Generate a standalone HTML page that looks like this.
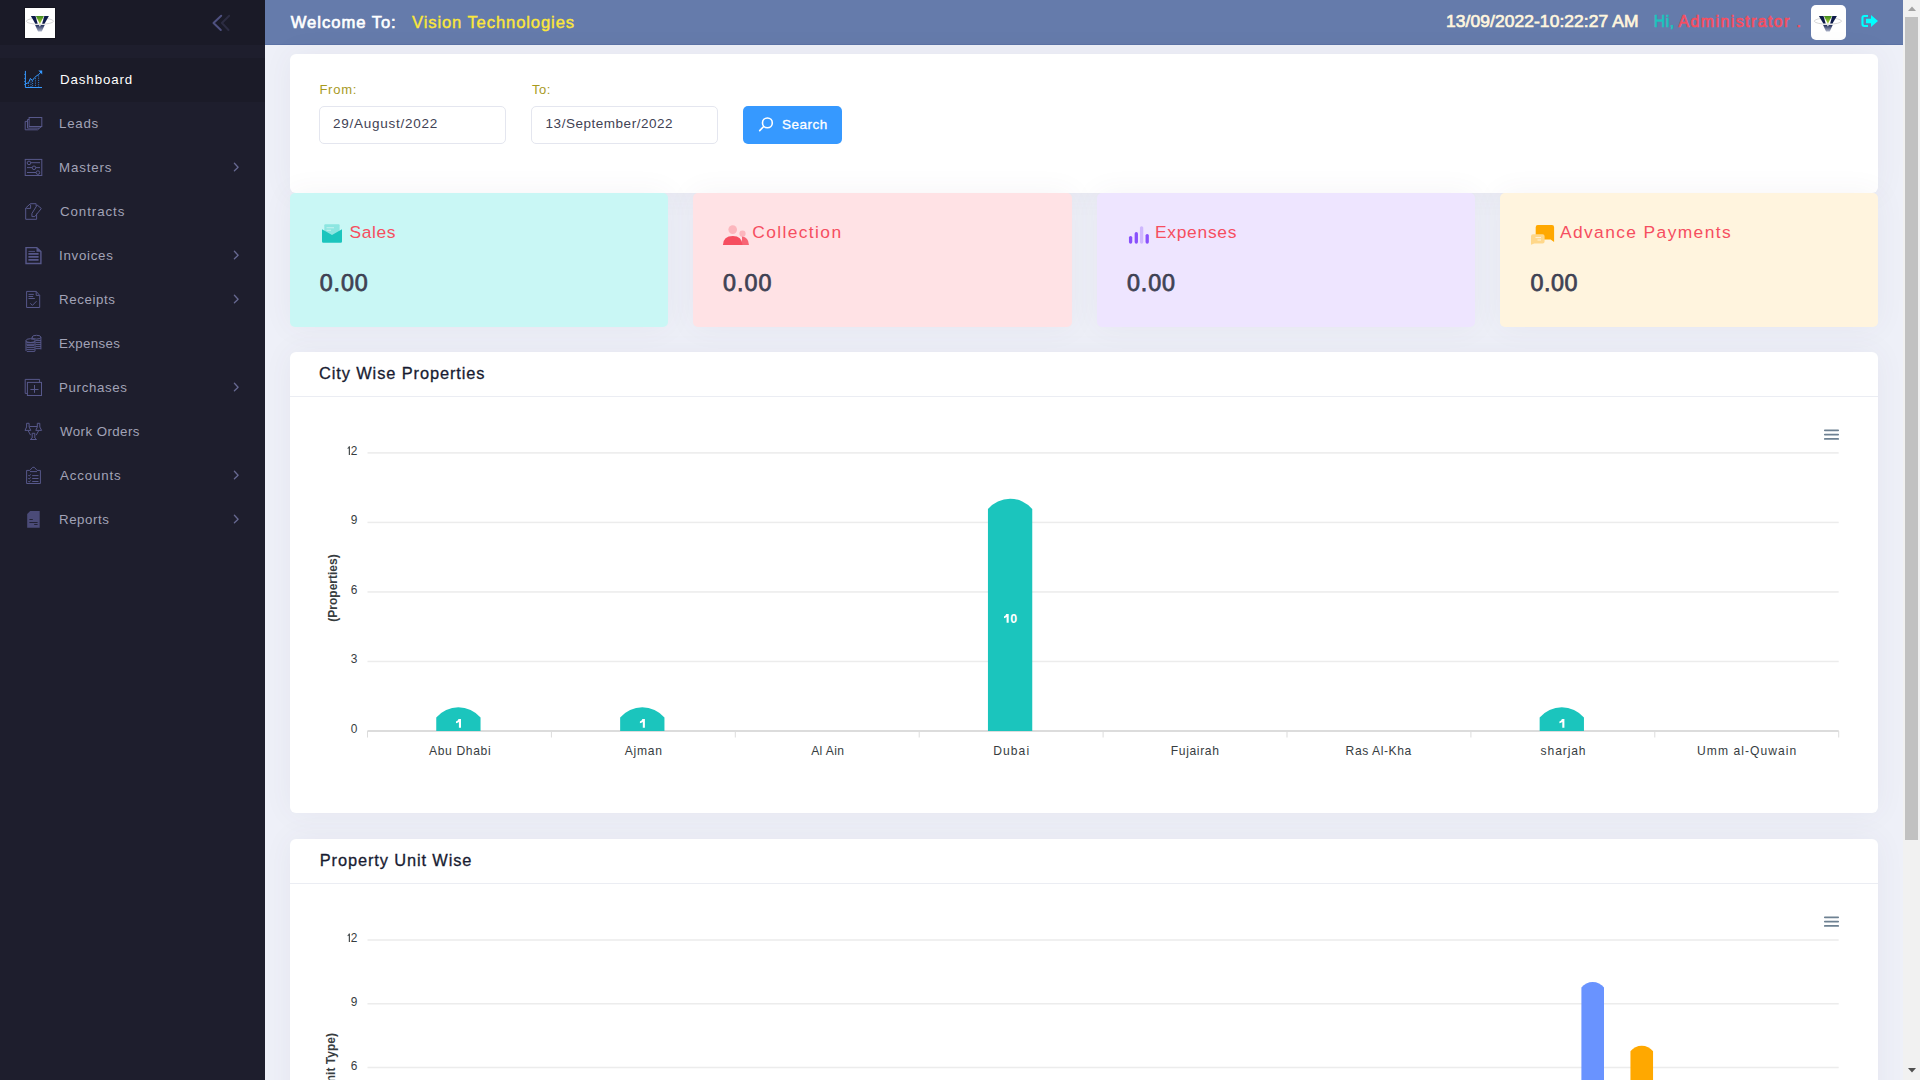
<!DOCTYPE html><html><head><meta charset="utf-8"><style>
*{margin:0;padding:0;box-sizing:border-box}
html,body{width:1920px;height:1080px;overflow:hidden;background:#eef0f8;font-family:"Liberation Sans", sans-serif}
.t{position:absolute;white-space:nowrap;line-height:1}
#aside{position:absolute;left:0;top:0;width:265px;height:1080px;background:#1e1e2d}
#aside-logo{position:absolute;left:0;top:0;width:265px;height:45px;background:#1a1a27}
#menu-active{position:absolute;left:0;top:58px;width:265px;height:44px;background:#1b1b28}
.logo{position:absolute;background:#fff}
#header{position:absolute;left:265px;top:0;width:1638px;height:45px;background:#657bab;border-bottom:1px solid #5b72a5}
.card{position:absolute;background:#fff;border-radius:6px;box-shadow:0 0 30px 0 rgba(82,63,105,0.06)}
.inp{position:absolute;background:#fff;border:1px solid #e4e6ef;border-radius:5px}
.btn{position:absolute;background:#3699ff;border-radius:5px}
.stat{position:absolute;border-radius:5px;box-shadow:0 0 30px 0 rgba(82,63,105,0.06)}
.hline{position:absolute;height:1px;background:#ebedf3}
.grid{position:absolute;height:1px;background:#e0e0e0}
.axis{position:absolute;height:1px;background:#e0e0e0}
.tick{position:absolute;width:1px;height:6px;background:#e0e0e0}
.ham{position:absolute;width:15px;height:11px;border-top:2px solid #6e8192;border-bottom:2px solid #6e8192}
.ham::after{content:"";position:absolute;left:0;top:2.5px;width:15px;height:2px;background:#6e8192}
#sb{position:absolute;left:1903px;top:0;width:17px;height:1080px;background:#f1f1f1}
#sbthumb{position:absolute;left:1905px;top:17px;width:13px;height:823px;background:#c1c1c1}
</style></head><body>
<div id="aside"></div><div id="aside-logo"></div><div id="menu-active"></div><div class="logo" style="left:25px;top:8px;width:30px;height:30px;box-shadow:0 0 0 1px #14141e"></div><svg style="position:absolute;left:0px;top:0px;overflow:visible" width="60" height="44" viewBox="0 0 60 44"><g transform="translate(39.9,16.1)">
<ellipse cx="0" cy="5.1" rx="13.6" ry="3.1" fill="none" stroke="#c4c4c4" stroke-width="0.7"/>
<polygon points="-9,0 -4.4,0 -2.2,7.6 -4.6,7.6" fill="#0d1a4a"/>
<polygon points="9,0 4.4,0 2.2,7.6 4.6,7.6" fill="#0d1a4a"/>
<polygon points="-4,0 4,0 0,7.8" fill="url(#lg39)"/>
<path d="M-4.8 9 H-0.9 L0 10.6 L0.9 9 H4.8 L2.1 14.9 Q1.9 15.4 1.2 15.4 H-1.2 Q-1.9 15.4 -2.1 14.9 Z" fill="url(#lb39)"/>
</g>
<defs><linearGradient id="lg39" x1="0" y1="0" x2="0" y2="1"><stop offset="0" stop-color="#3f8a1e"/><stop offset="1" stop-color="#b5d63c"/></linearGradient>
<linearGradient id="lb39" x1="0" y1="0" x2="0" y2="1"><stop offset="0" stop-color="#26325e"/><stop offset="1" stop-color="#aab1c7"/></linearGradient></defs></svg>
<svg style="position:absolute;left:20px;top:66px;overflow:visible" width="28" height="28" viewBox="0 0 28 28"><g fill="none" stroke="#3699ff" stroke-width="1">
<path d="M5.4 4.9 V21.5 H22"/>
<polyline points="5.4,17.9 8.6,16.6 10.4,12.4 12.4,14.5 14.5,11.7 16.9,9.6 18.7,8.6 21,6"/>
<path d="M8.6 17 V21 M11 13.5 V21 M12.6 14.8 V21 M15.5 12.2 V21 M18.6 9.5 V21" stroke-dasharray="1 1.2" stroke-width="0.8"/>
<path d="M4.2 8.4 H5.4 M4.2 12.4 H5.4 M4.2 15.5 H5.4 M4.2 18.5 H5.4" stroke-width="0.8"/>
</g><polygon points="18.4,4.6 22.2,4.6 22.2,8.4" fill="#3699ff"/></svg>
<svg style="position:absolute;left:20px;top:110px;overflow:visible" width="28" height="28" viewBox="0 0 28 28"><g fill="none" stroke="#57588a" stroke-width="1"><rect x="9.1" y="7.5" width="12.7" height="9"/>
<path d="M9.1 9.5 H7.5 V18.1 H19.4 L21.8 16.5"/><path d="M7.5 11.4 H5.2 V19.8 H17.6 L19.6 18.1"/></g></svg>
<svg style="position:absolute;left:20px;top:154px;overflow:visible" width="28" height="28" viewBox="0 0 28 28"><g fill="none" stroke="#57588a" stroke-width="1"><rect x="5.2" y="5.4" width="16.6" height="16.1"/>
<path d="M10.8 8.7 H20 M7 13.6 H12.2 M15.8 13.6 H20 M7 18.5 H16"/>
<circle cx="9" cy="8.9" r="1.8"/><circle cx="14" cy="13.8" r="1.8"/><circle cx="17.9" cy="18.6" r="1.8"/></g></svg>
<svg style="position:absolute;left:20px;top:198px;overflow:visible" width="28" height="28" viewBox="0 0 28 28"><g fill="none" stroke="#57588a" stroke-width="1"><path d="M5.7 10 L10.4 5.7 H16.1 V8 M16.6 15.6 V21.3 H5.7 V10 M6.3 10.4 H10.6 V6.5"/>
<path d="M17.2 7 L21.3 10.5 L14.8 18.6 H11.9 V15.5 Z"/></g></svg>
<svg style="position:absolute;left:20px;top:242px;overflow:visible" width="28" height="28" viewBox="0 0 28 28"><g fill="none" stroke="#57588a" stroke-width="1.4"><path d="M6 5.6 H16.8 L20.9 9.6 V21.5 H6 Z"/></g>
<polygon points="16.5,5.6 20.9,9.8 20.9,9.8 16.5,9.8" fill="#57588a"/>
<g stroke="#57588a" stroke-width="1.6"><path d="M8.4 11.9 H18.6 M8.4 14.9 H18.6 M8.4 17.9 H18.6"/></g>
<path d="M8.5 9.4 H15" stroke="#57588a" stroke-width="0.9"/></svg>
<svg style="position:absolute;left:20px;top:286px;overflow:visible" width="28" height="28" viewBox="0 0 28 28"><g fill="none" stroke="#57588a" stroke-width="1"><path d="M6.6 5.4 H16.2 L19.7 9.4 V21.5 H6.6 Z M16.2 5.4 V9.4 H19.7"/>
<path d="M8.5 8.4 H13.8 M8.5 10.5 H13.2 M8.5 12.5 H14.8"/><path d="M10.3 17.4 L12.5 19.3 L16.5 15.2"/></g></svg>
<svg style="position:absolute;left:20px;top:330px;overflow:visible" width="28" height="28" viewBox="0 0 28 28"><g fill="none" stroke="#57588a" stroke-width="1">
<ellipse cx="16.5" cy="7.2" rx="4.4" ry="1.9"/><path d="M12.1 7.2 V9.5 M20.9 7.2 V19.4"/>
<path d="M15.5 10.6 H21 M15.5 12.6 H21 M15.5 14.6 H21 M15.5 16.6 H21 M15.5 18.6 H20.8"/>
<ellipse cx="10.5" cy="10.6" rx="4.5" ry="1.9"/><path d="M6 10.6 V21 M15 10.6 V21.2"/>
<path d="M6.5 12.6 H14.6 M6.5 14.3 H14.6 M7 15.6 H14 M6.5 17.4 H14.6 M6.5 19.4 H14.6 M6.8 21.4 H14.8"/></g></svg>
<svg style="position:absolute;left:20px;top:374px;overflow:visible" width="28" height="28" viewBox="0 0 28 28"><g fill="none" stroke="#57588a" stroke-width="1"><path d="M19.6 8.4 V5.4 H5.2 V19.4 H7.4"/><rect x="7.4" y="8.4" width="14.1" height="13.1"/>
<path d="M10.4 15.5 H18.5 M14.5 11 V18.8"/></g></svg>
<svg style="position:absolute;left:20px;top:418px;overflow:visible" width="28" height="28" viewBox="0 0 28 28"><g fill="none" stroke="#57588a" stroke-width="1">
<path d="M6.6 5.3 H9.1 V9 L10.8 12.4 H5 L6.6 9 Z"/><path d="M17.3 5.3 H19.8 V9 L21.6 12.4 H15.8 L17.3 9 Z"/>
<path d="M9.5 8.5 H17"/><path d="M12.2 15.3 H14.8 V20 L16.5 21.5 H10.3 L12.2 20 Z"/>
<path d="M8.3 13 L10.6 17.2 M18.5 13 L16.2 17.2"/></g></svg>
<svg style="position:absolute;left:20px;top:462px;overflow:visible" width="28" height="28" viewBox="0 0 28 28"><g fill="none" stroke="#57588a" stroke-width="1"><path d="M9.8 8.4 H6.6 V21.5 H20.4 V8.4 H17.1 M9.8 8.4 L12.7 5.3 H14.3 L17.1 8.4 M10 9.6 H17"/>
<path d="M8.3 13.4 L9.3 14 L10.6 12.4 M8.3 16.4 L9.3 17 L10.6 15.4 M8.3 19.4 L9.3 20 L10.6 18.4"/>
<path d="M12.2 13.6 H18.5 M12.2 16.5 H18.5 M12.2 19.5 H18.5"/></g></svg>
<svg style="position:absolute;left:20px;top:506px;overflow:visible" width="28" height="28" viewBox="0 0 28 28"><path d="M10.2 5 H19.7 V21.8 H7.2 V8 Z" fill="#4b4b78"/>
<path d="M9.4 13.5 H12.8 M9.4 16.5 H17.6 M14.2 18.5 H17.6" stroke="#1e1e2d" stroke-width="0.9"/></svg>
<svg style="position:absolute;left:210px;top:14px" width="20" height="18" viewBox="0 0 20 18">
<path d="M11.2 1.8 L3.5 9 L10.8 16" fill="none" stroke="#4f5180" stroke-width="2" stroke-linecap="round" stroke-linejoin="round"/>
<path d="M19.2 1.8 L11.9 9 L18.5 16" fill="none" stroke="#2c2c42" stroke-width="2" stroke-linecap="round" stroke-linejoin="round"/></svg><svg style="position:absolute;left:232px;top:162px" width="8" height="11" viewBox="0 0 8 11"><path d="M2.4 1.3 L6.1 5.2 L2.4 8.8" fill="none" stroke="#676991" stroke-width="1.3" stroke-linecap="round" stroke-linejoin="round"/></svg><svg style="position:absolute;left:232px;top:250px" width="8" height="11" viewBox="0 0 8 11"><path d="M2.4 1.3 L6.1 5.2 L2.4 8.8" fill="none" stroke="#676991" stroke-width="1.3" stroke-linecap="round" stroke-linejoin="round"/></svg><svg style="position:absolute;left:232px;top:294px" width="8" height="11" viewBox="0 0 8 11"><path d="M2.4 1.3 L6.1 5.2 L2.4 8.8" fill="none" stroke="#676991" stroke-width="1.3" stroke-linecap="round" stroke-linejoin="round"/></svg><svg style="position:absolute;left:232px;top:382px" width="8" height="11" viewBox="0 0 8 11"><path d="M2.4 1.3 L6.1 5.2 L2.4 8.8" fill="none" stroke="#676991" stroke-width="1.3" stroke-linecap="round" stroke-linejoin="round"/></svg><svg style="position:absolute;left:232px;top:470px" width="8" height="11" viewBox="0 0 8 11"><path d="M2.4 1.3 L6.1 5.2 L2.4 8.8" fill="none" stroke="#676991" stroke-width="1.3" stroke-linecap="round" stroke-linejoin="round"/></svg><svg style="position:absolute;left:232px;top:514px" width="8" height="11" viewBox="0 0 8 11"><path d="M2.4 1.3 L6.1 5.2 L2.4 8.8" fill="none" stroke="#676991" stroke-width="1.3" stroke-linecap="round" stroke-linejoin="round"/></svg><div id="header"></div><div class="logo" style="left:1811px;top:5px;width:35px;height:35px;border-radius:5px"></div><svg style="position:absolute;left:1800px;top:0px;overflow:visible" width="60" height="44" viewBox="0 0 60 44"><g transform="translate(27.90000000000009,16)">
<ellipse cx="0" cy="5.1" rx="13.6" ry="3.1" fill="none" stroke="#c4c4c4" stroke-width="0.7"/>
<polygon points="-9,0 -4.4,0 -2.2,7.6 -4.6,7.6" fill="#0d1a4a"/>
<polygon points="9,0 4.4,0 2.2,7.6 4.6,7.6" fill="#0d1a4a"/>
<polygon points="-4,0 4,0 0,7.8" fill="url(#lg27)"/>
<path d="M-4.8 9 H-0.9 L0 10.6 L0.9 9 H4.8 L2.1 14.9 Q1.9 15.4 1.2 15.4 H-1.2 Q-1.9 15.4 -2.1 14.9 Z" fill="url(#lb27)"/>
</g>
<defs><linearGradient id="lg27" x1="0" y1="0" x2="0" y2="1"><stop offset="0" stop-color="#3f8a1e"/><stop offset="1" stop-color="#b5d63c"/></linearGradient>
<linearGradient id="lb27" x1="0" y1="0" x2="0" y2="1"><stop offset="0" stop-color="#26325e"/><stop offset="1" stop-color="#aab1c7"/></linearGradient></defs></svg>
<svg style="position:absolute;left:1858px;top:12px;overflow:visible" width="24" height="18" viewBox="0 0 24 18"><path d="M10 2.9 H6.3 Q3.4 2.9 3.4 5.8 V12.1 Q3.4 15 6.3 15 H10 V12.9 H6.3 Q5.5 12.9 5.5 12.1 V5.8 Q5.5 5 6.3 5 H10 Z" fill="#00ffff"/><path d="M8 6.7 H13 V2.9 L20 9 L13 15 V11.2 H8 Z" fill="#00ffff"/></svg>
<div class="card" style="left:290px;top:54px;width:1588px;height:139px;"></div><div class="inp" style="left:319px;top:106px;width:186.5px;height:37.5px;"></div><div class="inp" style="left:531px;top:106px;width:186.5px;height:37.5px;"></div><div class="btn" style="left:743px;top:106px;width:99px;height:38px;"></div><svg style="position:absolute;left:752px;top:112px;overflow:visible" width="30" height="24" viewBox="0 0 30 24"><circle cx="15.4" cy="10.9" r="4.9" fill="none" stroke="#fff" stroke-width="1.6"/><path d="M11.4 14.8 L7.7 18.6" stroke="#fff" stroke-width="1.6" stroke-linecap="round"/></svg>
<div class="stat" style="left:290px;top:193px;width:378.25px;height:133.5px;background:#c9f7f5"></div><div class="stat" style="left:693.25px;top:193px;width:378.25px;height:133.5px;background:#ffe2e5"></div><div class="stat" style="left:1096.5px;top:193px;width:378.25px;height:133.5px;background:#eee5ff"></div><div class="stat" style="left:1499.75px;top:193px;width:378.25px;height:133.5px;background:#fff4de"></div><svg style="position:absolute;left:320px;top:222px;overflow:visible" width="24" height="24" viewBox="0 0 24 24">
<rect x="4.3" y="2.2" width="15.3" height="12" rx="1" fill="#1bc5bd" opacity="0.35"/>
<path d="M6.5 5.8 H14 M6.5 8.3 H11" stroke="#ffffff" stroke-width="1.1" opacity="0.5"/>
<path d="M2 7.3 L12 13 L22 7.3 V19.5 Q22 20.7 20.8 20.7 H3.2 Q2 20.7 2 19.5 Z" fill="#1bc5bd"/></svg>
<svg style="position:absolute;left:720px;top:222px;overflow:visible" width="30" height="24" viewBox="0 0 30 24">
<circle cx="12.7" cy="7.6" r="4.3" fill="#f64e60" opacity="0.3"/>
<circle cx="22.5" cy="11.7" r="3.1" fill="#f64e60" opacity="0.3"/>
<path d="M22 14.6 Q28.5 15.2 29 23 H22 Z" fill="#f64e60" opacity="0.85"/>
<path d="M2.9 23 Q3.3 14 12.8 14 Q22 14 22.5 23 Z" fill="#f64e60"/></svg>
<svg style="position:absolute;left:1126px;top:222px;overflow:visible" width="26" height="24" viewBox="0 0 26 24">
<g stroke-linecap="round" stroke-width="3.3">
<path d="M4.6 15.6 V20.1" stroke="#8950fc"/><path d="M10.3 11.7 V20.1" stroke="#8950fc"/>
<path d="M15.6 5.8 V20" stroke="#8950fc" opacity="0.3"/><path d="M21.2 13.6 V20.1" stroke="#8950fc"/></g></svg>
<svg style="position:absolute;left:1528px;top:222px;overflow:visible" width="28" height="26" viewBox="0 0 28 26">
<path d="M9.8 3.1 H24 Q26.1 3.1 26.1 5.2 V20 L22.6 17.5 H9.8 Q7.7 17.5 7.7 15.4 V5.2 Q7.7 3.1 9.8 3.1 Z" fill="#ffa800"/>
<path d="M5 12.3 H14.6 Q16.6 12.3 16.6 14.3 V19.5 Q16.6 21.5 14.6 21.5 H6.3 L3 22.8 V14.3 Q3 12.3 5 12.3 Z" fill="#ffd78a"/>
<path d="M7.5 15.6 H13 M9.5 18 H13" stroke="#ffffff" stroke-width="1" opacity="0.7"/></svg>
<div class="card" style="left:290px;top:352px;width:1588px;height:461px;"></div><div class="hline" style="left:290px;top:396px;width:1588px;"></div><svg style="position:absolute;left:0;top:0" width="1920" height="1080"><rect x="367.5" y="452.15" width="1471.2" height="1.5" fill="#ececec"/><path d="M349.9 446.35 V454.95 H348.8 V448.35 L347.6 449.05 V448.05 Q348.6 447.45 348.9 446.35 Z" fill="#373d3f"/><rect x="367.5" y="521.67" width="1471.2" height="1.5" fill="#ececec"/><rect x="367.5" y="591.20" width="1471.2" height="1.5" fill="#ececec"/><rect x="367.5" y="660.73" width="1471.2" height="1.5" fill="#ececec"/><rect x="367.5" y="730" width="1471.2" height="2" fill="#dcdcdc"/><rect x="367.00" y="731" width="1" height="6.5" fill="#dcdcdc"/><rect x="550.90" y="731" width="1" height="6.5" fill="#dcdcdc"/><rect x="734.80" y="731" width="1" height="6.5" fill="#dcdcdc"/><rect x="918.70" y="731" width="1" height="6.5" fill="#dcdcdc"/><rect x="1102.60" y="731" width="1" height="6.5" fill="#dcdcdc"/><rect x="1286.50" y="731" width="1" height="6.5" fill="#dcdcdc"/><rect x="1470.40" y="731" width="1" height="6.5" fill="#dcdcdc"/><rect x="1654.30" y="731" width="1" height="6.5" fill="#dcdcdc"/><rect x="1838.20" y="731" width="1" height="6.5" fill="#dcdcdc"/><path d="M436.25 717.53 A29.15 29.15 0 0 1 480.55 717.53 L480.55 731.00 L436.25 731.00 Z" fill="#1bc5bd"/><path d="M461.00 719.10 V727.80 H458.90 V722.10 Q457.70 723.00 456.00 723.20 V721.50 Q458.20 721.00 458.50 719.10 Z" fill="#fff"/><path d="M620.15 717.53 A29.15 29.15 0 0 1 664.45 717.53 L664.45 731.00 L620.15 731.00 Z" fill="#1bc5bd"/><path d="M644.90 719.10 V727.80 H642.80 V722.10 Q641.60 723.00 639.90 723.20 V721.50 Q642.10 721.00 642.40 719.10 Z" fill="#fff"/><path d="M987.95 508.95 A29.15 29.15 0 0 1 1032.25 508.95 L1032.25 731.00 L987.95 731.00 Z" fill="#1bc5bd"/><path d="M1008.70 614.10 V622.80 H1006.60 V617.10 Q1005.40 618.00 1004.00 618.20 V616.50 Q1005.90 616.00 1006.20 614.10 Z" fill="#fff"/><path d="M1539.65 717.53 A29.15 29.15 0 0 1 1583.95 717.53 L1583.95 731.00 L1539.65 731.00 Z" fill="#1bc5bd"/><path d="M1564.40 719.10 V727.80 H1562.30 V722.10 Q1561.10 723.00 1559.40 723.20 V721.50 Q1561.60 721.00 1561.90 719.10 Z" fill="#fff"/></svg>
<div class="t" style="left:317.30px;top:445.91px;width:40px;text-align:right;font-size:11.9px;color:#373d3f">2</div><div class="t" style="left:317.30px;top:515.44px;width:40px;text-align:right;font-size:11.9px;color:#373d3f">9</div><div class="t" style="left:317.30px;top:584.96px;width:40px;text-align:right;font-size:11.9px;color:#373d3f">6</div><div class="t" style="left:317.30px;top:654.49px;width:40px;text-align:right;font-size:11.9px;color:#373d3f">3</div><div class="t" style="left:317.30px;top:724.01px;width:40px;text-align:right;font-size:11.9px;color:#373d3f">0</div><div class="t dl" style="left:1010.2px;top:613.03px;font-size:12.4px;font-weight:700;color:#fff">0</div><div class="t" style="left:272.5px;top:581px;width:120px;text-align:center;font-size:12px;font-weight:700;color:#373d3f;transform:rotate(-90deg);line-height:14px">(Properties)</div><svg style="position:absolute;left:1820px;top:424.00px" width="24" height="20"><path d="M4.8 6.3 H18.2 M4.8 10.6 H18.2 M4.8 14.9 H18.2" stroke="#6e8192" stroke-width="1.7" stroke-linecap="round"/></svg><div class="card" style="left:290px;top:839px;width:1588px;height:400px;"></div><div class="hline" style="left:290px;top:883px;width:1588px;"></div><svg style="position:absolute;left:0;top:0" width="1920" height="1080"><rect x="367.5" y="939.25" width="1471.2" height="1.5" fill="#ececec"/><path d="M349.9 933.45 V942.05 H348.8 V935.45 L347.6 936.15 V935.15 Q348.6 934.55 348.9 933.45 Z" fill="#373d3f"/><rect x="367.5" y="1003.00" width="1471.2" height="1.5" fill="#ececec"/><rect x="367.5" y="1066.75" width="1471.2" height="1.5" fill="#ececec"/><path d="M1581.40 987.50 A14.36 14.36 0 0 1 1604.00 987.50 L1604.00 1085.00 L1581.40 1085.00 Z" fill="#6993ff"/><path d="M1630.45 1051.25 A14.36 14.36 0 0 1 1653.05 1051.25 L1653.05 1085.00 L1630.45 1085.00 Z" fill="#ffa800"/></svg>
<div class="t" style="left:317.30px;top:933.01px;width:40px;text-align:right;font-size:11.9px;color:#373d3f">2</div><div class="t" style="left:317.30px;top:996.76px;width:40px;text-align:right;font-size:11.9px;color:#373d3f">9</div><div class="t" style="left:317.30px;top:1060.51px;width:40px;text-align:right;font-size:11.9px;color:#373d3f">6</div><div class="t" style="left:271.0px;top:1056.5px;width:120px;text-align:center;font-size:12px;font-weight:700;color:#373d3f;transform:rotate(-90deg);line-height:14px">(Unit Type)</div><svg style="position:absolute;left:1820px;top:911.00px" width="24" height="20"><path d="M4.8 6.3 H18.2 M4.8 10.6 H18.2 M4.8 14.9 H18.2" stroke="#6e8192" stroke-width="1.7" stroke-linecap="round"/></svg><div class="t" style="left:290.80px;top:14.67px;font-size:16.6px;color:#ffffff;font-weight:400;letter-spacing:0.96px;-webkit-text-stroke:0.65px currentColor;">Welcome To:</div>
<div class="t" style="left:412.00px;top:14.67px;font-size:16.6px;color:#fbe73a;font-weight:400;letter-spacing:0.889px;-webkit-text-stroke:0.4px currentColor;">Vision Technologies</div>
<div class="t" style="left:1446.00px;top:12.79px;font-size:17.4px;color:#fff6de;font-weight:400;letter-spacing:0.095px;-webkit-text-stroke:0.7px currentColor;">13/09/2022-10:22:27 AM</div>
<div class="t" style="left:1653.80px;top:13.74px;font-size:15.8px;color:#1bc5bd;font-weight:400;letter-spacing:0.55px;-webkit-text-stroke:0.65px currentColor;">Hi,</div>
<div class="t" style="left:1678.60px;top:13.74px;font-size:15.8px;color:#f64e60;font-weight:400;letter-spacing:1.468px;-webkit-text-stroke:0.65px currentColor;">Administrator .</div>
<div class="t" style="left:319.40px;top:83.34px;font-size:13px;color:#a89a1e;font-weight:400;letter-spacing:0.775px;">From:</div>
<div class="t" style="left:532.00px;top:83.24px;font-size:13px;color:#a89a1e;font-weight:400;letter-spacing:0.5px;">To:</div>
<div class="t" style="left:333.00px;top:117.46px;font-size:13.5px;color:#3f4254;font-weight:400;letter-spacing:0.748px;">29/August/2022</div>
<div class="t" style="left:545.60px;top:117.36px;font-size:13.5px;color:#3f4254;font-weight:400;letter-spacing:0.521px;">13/September/2022</div>
<div class="t" style="left:782.00px;top:117.56px;font-size:13.5px;color:#ffffff;font-weight:400;letter-spacing:0.5px;-webkit-text-stroke:0.3px currentColor;">Search</div>
<div class="t" style="left:349.60px;top:223.54px;font-size:17.4px;color:#f64e60;font-weight:400;letter-spacing:0.6px;">Sales</div>
<div class="t" style="left:752.20px;top:223.54px;font-size:17.4px;color:#f64e60;font-weight:400;letter-spacing:1.39px;">Collection</div>
<div class="t" style="left:1155.00px;top:224.14px;font-size:17.4px;color:#f64e60;font-weight:400;letter-spacing:0.715px;">Expenses</div>
<div class="t" style="left:1560.00px;top:224.04px;font-size:17.4px;color:#f64e60;font-weight:400;letter-spacing:1.386px;">Advance Payments</div>
<div class="t" style="left:319.80px;top:272.15px;font-size:23.3px;color:#3f4254;font-weight:400;letter-spacing:0.831px;-webkit-text-stroke:0.75px currentColor;">0.00</div>
<div class="t" style="left:723.00px;top:272.15px;font-size:23.3px;color:#3f4254;font-weight:400;letter-spacing:1.0px;-webkit-text-stroke:0.75px currentColor;">0.00</div>
<div class="t" style="left:1127.00px;top:272.15px;font-size:23.3px;color:#3f4254;font-weight:400;letter-spacing:0.899px;-webkit-text-stroke:0.75px currentColor;">0.00</div>
<div class="t" style="left:1530.60px;top:272.15px;font-size:23.3px;color:#3f4254;font-weight:400;letter-spacing:0.537px;-webkit-text-stroke:0.75px currentColor;">0.00</div>
<div class="t" style="left:319.00px;top:364.90px;font-size:16.4px;color:#181c32;font-weight:400;letter-spacing:0.894px;-webkit-text-stroke:0.3px currentColor;">City Wise Properties</div>
<div class="t" style="left:319.80px;top:851.80px;font-size:16.4px;color:#181c32;font-weight:400;letter-spacing:0.882px;-webkit-text-stroke:0.3px currentColor;">Property Unit Wise</div>
<div class="t" style="left:60.00px;top:72.69px;font-size:13.3px;color:#ffffff;font-weight:400;letter-spacing:0.9px;">Dashboard</div>
<div class="t" style="left:59.00px;top:116.69px;font-size:13.3px;color:#a2a3b7;font-weight:400;letter-spacing:0.75px;">Leads</div>
<div class="t" style="left:59.00px;top:160.69px;font-size:13.3px;color:#a2a3b7;font-weight:400;letter-spacing:0.855px;">Masters</div>
<div class="t" style="left:60.00px;top:204.69px;font-size:13.3px;color:#a2a3b7;font-weight:400;letter-spacing:0.925px;">Contracts</div>
<div class="t" style="left:59.00px;top:248.69px;font-size:13.3px;color:#a2a3b7;font-weight:400;letter-spacing:0.715px;">Invoices</div>
<div class="t" style="left:59.00px;top:292.69px;font-size:13.3px;color:#a2a3b7;font-weight:400;letter-spacing:0.607px;">Receipts</div>
<div class="t" style="left:59.00px;top:336.69px;font-size:13.3px;color:#a2a3b7;font-weight:400;letter-spacing:0.34px;">Expenses</div>
<div class="t" style="left:59.00px;top:380.69px;font-size:13.3px;color:#a2a3b7;font-weight:400;letter-spacing:0.65px;">Purchases</div>
<div class="t" style="left:60.00px;top:424.69px;font-size:13.3px;color:#a2a3b7;font-weight:400;letter-spacing:0.43px;">Work Orders</div>
<div class="t" style="left:60.00px;top:468.69px;font-size:13.3px;color:#a2a3b7;font-weight:400;letter-spacing:0.848px;">Accounts</div>
<div class="t" style="left:59.00px;top:512.69px;font-size:13.3px;color:#a2a3b7;font-weight:400;letter-spacing:0.547px;">Reports</div>
<div class="t" style="left:429.00px;top:744.98px;font-size:12.1px;color:#373d3f;font-weight:400;letter-spacing:0.65px;">Abu Dhabi</div>
<div class="t" style="left:624.80px;top:744.98px;font-size:12.1px;color:#373d3f;font-weight:400;letter-spacing:0.725px;">Ajman</div>
<div class="t" style="left:811.20px;top:744.98px;font-size:12.1px;color:#373d3f;font-weight:400;letter-spacing:0.36px;">Al Ain</div>
<div class="t" style="left:993.20px;top:744.98px;font-size:12.1px;color:#373d3f;font-weight:400;letter-spacing:1.075px;">Dubai</div>
<div class="t" style="left:1170.80px;top:744.98px;font-size:12.1px;color:#373d3f;font-weight:400;letter-spacing:0.625px;">Fujairah</div>
<div class="t" style="left:1345.60px;top:744.98px;font-size:12.1px;color:#373d3f;font-weight:400;letter-spacing:0.574px;">Ras Al-Kha</div>
<div class="t" style="left:1540.60px;top:744.98px;font-size:12.1px;color:#373d3f;font-weight:400;letter-spacing:0.881px;">sharjah</div>
<div class="t" style="left:1697.00px;top:744.98px;font-size:12.1px;color:#373d3f;font-weight:400;letter-spacing:1.054px;">Umm al-Quwain</div>
<div id="sb"></div><div id="sbthumb"></div><svg style="position:absolute;left:1907px;top:5px" width="10" height="7"><path d="M1 6 L5 1.5 L9 6 Z" fill="#a3a3a3"/></svg><svg style="position:absolute;left:1907px;top:1067px" width="10" height="7"><path d="M1 1 L5 5.5 L9 1 Z" fill="#505050"/></svg>
</body></html>
